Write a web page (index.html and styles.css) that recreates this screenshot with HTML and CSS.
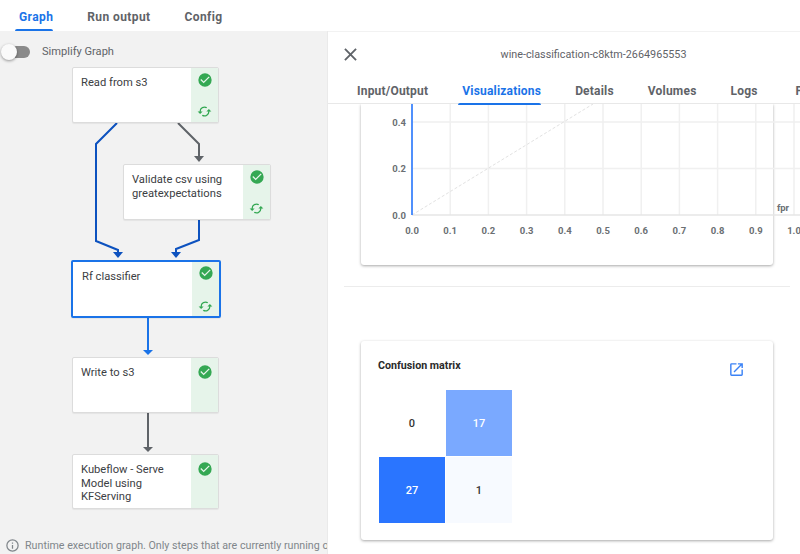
FILE: index.html
```html
<!DOCTYPE html>
<html lang="en">
<head>
    <meta charset="UTF-8">
    <meta name="viewport" content="width=device-width, initial-scale=1.0">
    <title>Run details</title>
    <link rel="stylesheet" href="styles.css">
</head>
<body>
    <div class="page">
        <nav class="main-tabs">
            <span class="tab active">Graph</span>
            <span class="tab">Run output</span>
            <span class="tab">Config</span>
        </nav>

        <div class="split">
            <section class="graph-panel">
                <div class="simplify">
                    <span class="switch"><span class="thumb"></span></span>
                    <span>Simplify Graph</span>
                </div>

                <div class="canvas">
                    <svg class="edges" width="327" height="523" viewBox="0 31 327 523">
                        <g fill="none" stroke-width="2">
                            <path stroke="#0d52bf" d="M117 123 96 144V241L118 250V253"/>
                            <path stroke="#0d52bf" d="M199 220V240L176 249V253"/>
                            <path stroke="#5f6368" d="M178 123 199 144V157"/>
                            <path stroke="#1a73e8" d="M148 317V351"/>
                            <path stroke="#5f6368" d="M148 412V447"/>
                        </g>
                        <path fill="#0d52bf" d="M113 252H123L118 258Z"/>
                        <path fill="#0d52bf" d="M171 252H181L176 258Z"/>
                        <path fill="#5f6368" d="M194 156H204L199 162Z"/>
                        <path fill="#1a73e8" d="M143 350H153L148 355Z"/>
                        <path fill="#5f6368" d="M143 447H153L148 452Z"/>
                    </svg>

                    <div class="node n1">
                        <div class="node-name">Read from s3</div>
                        <div class="node-status">
                            <svg class="ok" viewBox="0 0 24 24"><path d="M12 2a10 10 0 1 0 0 20 10 10 0 0 0 0-20zm-2 15-5-5 1.4-1.4L10 14.2l7.6-7.6L19 8z"/></svg>
                            <svg class="cached" viewBox="0 0 24 24"><path d="M19 8l-4 4h3a6 6 0 0 1-8.8 5.3l-1.5 1.5A8 8 0 0 0 20 12h3zM6 12a6 6 0 0 1 8.8-5.3l1.5-1.5A8 8 0 0 0 4 12H1l4 4 4-4z"/></svg>
                        </div>
                    </div>
                    <div class="node n2">
                        <div class="node-name">Validate csv using greatexpectations</div>
                        <div class="node-status">
                            <svg class="ok" viewBox="0 0 24 24"><path d="M12 2a10 10 0 1 0 0 20 10 10 0 0 0 0-20zm-2 15-5-5 1.4-1.4L10 14.2l7.6-7.6L19 8z"/></svg>
                            <svg class="cached" viewBox="0 0 24 24"><path d="M19 8l-4 4h3a6 6 0 0 1-8.8 5.3l-1.5 1.5A8 8 0 0 0 20 12h3zM6 12a6 6 0 0 1 8.8-5.3l1.5-1.5A8 8 0 0 0 4 12H1l4 4 4-4z"/></svg>
                        </div>
                    </div>
                    <div class="node n3 selected">
                        <div class="node-name">Rf classifier</div>
                        <div class="node-status">
                            <svg class="ok" viewBox="0 0 24 24"><path d="M12 2a10 10 0 1 0 0 20 10 10 0 0 0 0-20zm-2 15-5-5 1.4-1.4L10 14.2l7.6-7.6L19 8z"/></svg>
                            <svg class="cached" viewBox="0 0 24 24"><path d="M19 8l-4 4h3a6 6 0 0 1-8.8 5.3l-1.5 1.5A8 8 0 0 0 20 12h3zM6 12a6 6 0 0 1 8.8-5.3l1.5-1.5A8 8 0 0 0 4 12H1l4 4 4-4z"/></svg>
                        </div>
                    </div>
                    <div class="node n4">
                        <div class="node-name">Write to s3</div>
                        <div class="node-status">
                            <svg class="ok" viewBox="0 0 24 24"><path d="M12 2a10 10 0 1 0 0 20 10 10 0 0 0 0-20zm-2 15-5-5 1.4-1.4L10 14.2l7.6-7.6L19 8z"/></svg>
                        </div>
                    </div>
                    <div class="node n5">
                        <div class="node-name">Kubeflow - Serve Model using KFServing</div>
                        <div class="node-status">
                            <svg class="ok" viewBox="0 0 24 24"><path d="M12 2a10 10 0 1 0 0 20 10 10 0 0 0 0-20zm-2 15-5-5 1.4-1.4L10 14.2l7.6-7.6L19 8z"/></svg>
                        </div>
                    </div>
                </div>

                <div class="legend">
                    <svg class="info" viewBox="0 0 24 24"><path d="M11 7h2v2h-2zm0 4h2v6h-2zm1-9a10 10 0 1 0 0 20 10 10 0 0 0 0-20zm0 18a8 8 0 1 1 0-16 8 8 0 0 1 0 16z"/></svg>
                    <span>Runtime execution graph. Only steps that are currently running or have already completed are shown.</span>
                </div>
            </section>

            <section class="side-panel">
                <header class="side-head">
                    <svg class="close" viewBox="0 0 14 14"><path d="M1 1 13 13M13 1 1 13"/></svg>
                    <div class="side-title">wine-classification-c8ktm-2664965553</div>
                </header>

                <nav class="side-tabs">
                    <span class="tab">Input/Output</span>
                    <span class="tab active">Visualizations</span>
                    <span class="tab">Details</span>
                    <span class="tab">Volumes</span>
                    <span class="tab">Logs</span>
                    <span class="tab last-tab">Pod</span>
                </nav>

                <div class="side-body">
                    <div class="card roc-card">
                        <svg class="roc" width="450" height="132" viewBox="361 104 450 132">
                            <g class="grid">
                                <path d="M412 104V215M450.2 104V215M488.4 104V215M526.6 104V215M564.8 104V215M603 104V215M641.2 104V215M679.4 104V215M717.6 104V215M755.8 104V215M794 104V215"/>
                                <path d="M412 122H800M412 168.500H800"/>
                            </g>
                            <path class="axis" d="M412 215H800"/>
                            <path class="diagonal" d="M412 215 593 104"/>
                            <path class="curve" d="M412 215V104"/>
                            <g class="ticks">
                                <text x="406" y="126" text-anchor="end">0.4</text>
                                <text x="406" y="172" text-anchor="end">0.2</text>
                                <text x="406" y="219" text-anchor="end">0.0</text>
                                <text x="412" y="234" text-anchor="middle">0.0</text>
                                <text x="450.200" y="234" text-anchor="middle">0.1</text>
                                <text x="488.400" y="234" text-anchor="middle">0.2</text>
                                <text x="526.600" y="234" text-anchor="middle">0.3</text>
                                <text x="564.800" y="234" text-anchor="middle">0.4</text>
                                <text x="603" y="234" text-anchor="middle">0.5</text>
                                <text x="641.200" y="234" text-anchor="middle">0.6</text>
                                <text x="679.400" y="234" text-anchor="middle">0.7</text>
                                <text x="717.600" y="234" text-anchor="middle">0.8</text>
                                <text x="755.800" y="234" text-anchor="middle">0.9</text>
                                <text x="794" y="234" text-anchor="middle">1.0</text>
                                <text x="783" y="211" text-anchor="middle">fpr</text>
                            </g>
                        </svg>
                    </div>

                    <hr class="divider">

                    <div class="card matrix-card">
                        <div class="matrix-head">
                            <span class="matrix-title">Confusion matrix</span>
                            <svg class="popout" viewBox="0 0 24 24"><path d="M19 19H5V5h7V3H5a2 2 0 0 0-2 2v14a2 2 0 0 0 2 2h14a2 2 0 0 0 2-2v-7h-2zM14 3v2h3.600l-9.800 9.800 1.400 1.400L19 6.400V10h2V3z"/></svg>
                        </div>
                        <div class="matrix">
                            <div class="cell c0">0</div>
                            <div class="cell c17">17</div>
                            <div class="cell c27">27</div>
                            <div class="cell c1">1</div>
                        </div>
                    </div>
                </div>
            </section>
        </div>
    </div>
</body>
</html>
```

FILE: styles.css
```css
* { box-sizing: border-box; }
html, body { height: 100%; margin: 0; overflow: hidden; }
body { font-family: Roboto, "Liberation Sans", sans-serif; font-size: 12px; color: #3c4043; background: white; }
.page { height: 554px; display: flex; flex-direction: column; }

.tab { font-weight: 700; font-size: 12px; color: #5f6368; letter-spacing: 0.2px; }

.main-tabs { height: 31px; display: flex; padding-left: 19px; gap: 34px; align-items: flex-start; }
.main-tabs .tab { padding-top: 10px; height: 31px; position: relative; letter-spacing: 0.4px; }
.main-tabs .tab.active { color: #1a73e8; }
.main-tabs .tab.active::after { content: ""; position: absolute; left: -4px; right: 0; bottom: 0; height: 2px; background: #1a73e8; border-radius: 2px 2px 0 0; }

.split { flex: 1; display: flex; min-height: 0; }

.graph-panel { width: 328px; background: #f2f2f2; border-right: 1px solid #eaeaea; position: relative; overflow: hidden; }
.simplify { height: 40px; padding: 14px 0 0 2px; display: flex; align-items: flex-start; gap: 12px; color: #5f6368; font-size: 11.100px; }
.switch { width: 28px; height: 12px; margin-top: 1px; background: #8a8a8a; border-radius: 6px; position: relative; }
.thumb { position: absolute; left: -1px; top: -2px; width: 16px; height: 16px; border-radius: 50%; background: #fafafa; box-shadow: 0 1px 3px rgba(0,0,0,0.4); }

.canvas { position: absolute; inset: 0; }
.edges { position: absolute; left: 0; top: 0; }
.node { position: absolute; width: 147px; height: 56px; display: flex; background: white; border: 1px solid #dcdcdc; border-radius: 2px; box-shadow: 0 1px 1px rgba(0,0,0,0.06); overflow: hidden; }
.node-name { flex: 1; padding: 8px 8px; font-size: 11.200px; line-height: 13.600px; color: #3c4043; }
.node-status { width: 27px; background: #e6f4ea; display: flex; flex-direction: column; align-items: center; justify-content: space-between; padding: 4px 0 3px; }
.ok { width: 16px; height: 16px; fill: #34a853; }
.cached { width: 15px; height: 15px; fill: #34a853; }
.n1 { left: 72px; top: 36px; }
.n2 { left: 123px; top: 133px; width: 148px; }
.n3 { left: 71px; top: 229px; width: 150px; height: 58px; }
.n4 { left: 72px; top: 326px; }
.n5 { left: 72px; top: 423px; height: 55px; }
.n4 .node-status, .n5 .node-status { padding-top: 6px; }
.selected { border: 2px solid #1a73e8; }
.selected .node-name { padding-left: 9px; }
.selected .node-status { padding: 3px 0 2px; }

.legend { position: absolute; left: 5px; bottom: 1px; display: flex; align-items: center; gap: 5px; white-space: nowrap; color: #80868b; font-size: 10.700px; }
.info { width: 15px; height: 15px; fill: #80868b; flex: none; }

.side-panel { flex: 1; min-width: 0; overflow: hidden; display: flex; flex-direction: column; background: white; }
.side-head { height: 45px; flex: none; display: flex; align-items: center; padding-left: 16px; border-top: 1px solid #f2f2f2; }
.close { width: 13px; height: 13px; stroke: #5f6368; stroke-width: 2; fill: none; flex: none; }
.side-title { margin-left: 5px; width: 463px; flex: none; text-align: center; font-size: 10.800px; color: #5f6368; }
.side-tabs { height: 28px; flex: none; display: flex; gap: 34px; padding: 8px 0 0 29px; border-bottom: 1px solid #e8e8e8; white-space: nowrap; }
.side-tabs .tab { height: 20px; position: relative; }
.side-tabs .tab.active { color: #1a73e8; }
.side-tabs .tab.active::after { content: ""; position: absolute; left: -4px; right: 0; bottom: -1px; height: 2px; background: #1a73e8; border-radius: 2px 2px 0 0; }
.side-tabs .last-tab { margin-left: 4px; }

.side-body { flex: 1; min-height: 0; overflow: hidden; padding: 0 10px 0 16px; }
.card { width: 412px; margin-left: 17px; background: white; border-radius: 3px; box-shadow: 0 1px 3px rgba(0,0,0,0.35); }
.roc-card { height: 161px; border-radius: 0 0 3px 3px; }
.roc { display: block; overflow: visible; }
.grid path { stroke: #f0f0f0; stroke-width: 1.500; fill: none; }
.axis { stroke: #e6e6e6; stroke-width: 1.500; fill: none; }
.diagonal { stroke: #e2e2e2; stroke-width: 1; stroke-dasharray: 3 2; fill: none; }
.curve { stroke: #1a6fff; stroke-width: 1.500; fill: none; }
.ticks text { font-family: Roboto, sans-serif; font-size: 9.500px; font-weight: 700; fill: #6b6f73; }
.divider { margin: 21px 0 54px; border: 0; border-top: 1px solid #ececec; }

.matrix-card { height: 199px; padding: 18px 17px; }
.matrix-head { height: 31px; display: flex; justify-content: space-between; align-items: flex-start; }
.matrix-title { font-size: 10.700px; font-weight: 700; color: #2a2a2a; }
.popout { width: 17px; height: 17px; margin: 2px 11px 0 0; fill: #3b82f6; }
.matrix { display: grid; grid-template-columns: 67px 67px; grid-template-rows: 67px 67px; width: 134px; margin-left: 1px; }
.cell { display: flex; align-items: center; justify-content: center; font-size: 11px; font-weight: 500; border-style: solid; border-color: white; border-width: 0 1px 1px 0; }
.c0 { color: #333; }
.c17 { background: #7aa9ff; color: white; }
.c27 { background: #2a75ff; color: white; }
.c1 { background: #f7faff; color: #333; }
```
